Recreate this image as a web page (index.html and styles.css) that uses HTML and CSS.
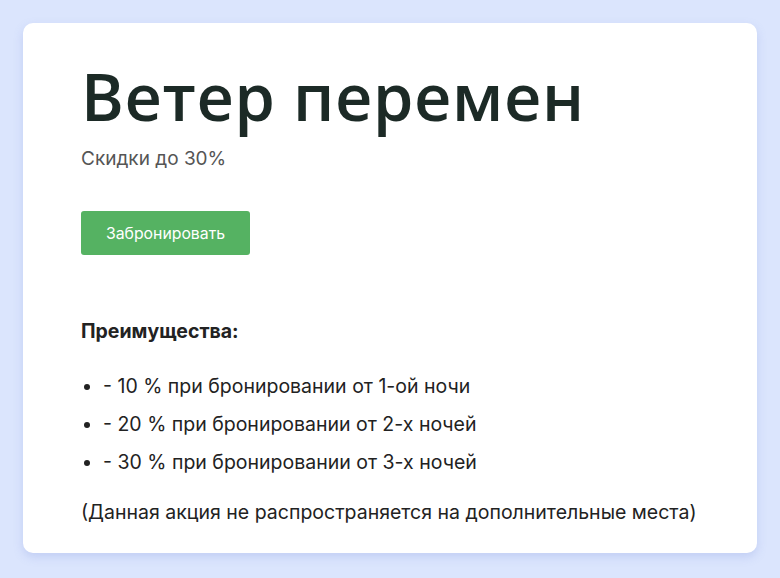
FILE: index.html
```html
<!DOCTYPE html>
<html lang="ru">
<head>
    <meta charset="UTF-8">
    <meta name="viewport" content="width=device-width, initial-scale=1.0">
    <title>Ветер перемен</title>
    <link rel="stylesheet" href="styles.css">
</head>
<body>
    <div class="card">
        <h1>Ветер перемен</h1>
        <p class="subtitle">Скидки до 30%</p>
        <button type="button" class="book">Забронировать</button>
        <h3>Преимущества:</h3>
        <ul class="perks">
            <li>- 10 % при бронировании от 1-ой ночи</li>
            <li>- 20 % при бронировании от 2-х ночей</li>
            <li>- 30 % при бронировании от 3-х ночей</li>
        </ul>
        <p class="note">(Данная акция не распространяется на дополнительные места)</p>
    </div>
</body>
</html>
```

FILE: styles.css
```css
body {
    font-family: Inter, "Noto Sans", sans-serif;
    background-color: #dbe5fd;
    color: #222;
    margin: 0;
    padding: 23px;
}
.card {
    background: #fff;
    border-radius: 10px;
    box-shadow: 0 4px 10px rgba(120, 140, 220, 0.25);
    padding: 41px 58px 26px;
    height: 530px;
    box-sizing: border-box;
}
h1 {
    font-family: "Open Sans", sans-serif;
    font-weight: 600;
    font-size: 65px;
    line-height: 1;
    color: #1c2a26;
    margin: 0;
    letter-spacing: 0.6px;
}
.subtitle {
    font-size: 19px;
    color: #555;
    margin: 18px 0 0;
}
.book {
    margin-top: 41px;
    background-color: #55b262;
    color: #fff;
    border: none;
    border-radius: 3px;
    width: 169px;
    height: 44px;
    font-family: Inter, sans-serif;
    font-size: 15.8px;
    cursor: pointer;
}
h3 {
    font-size: 19.5px;
    font-weight: 700;
    margin: 64px 0 0;
}
.perks {
    margin: 24px 0 0;
    padding-left: 22px;
    font-size: 19.5px;
    line-height: 38px;
}
.note {
    font-size: 19.5px;
    margin: 19px 0 0;
}
```
